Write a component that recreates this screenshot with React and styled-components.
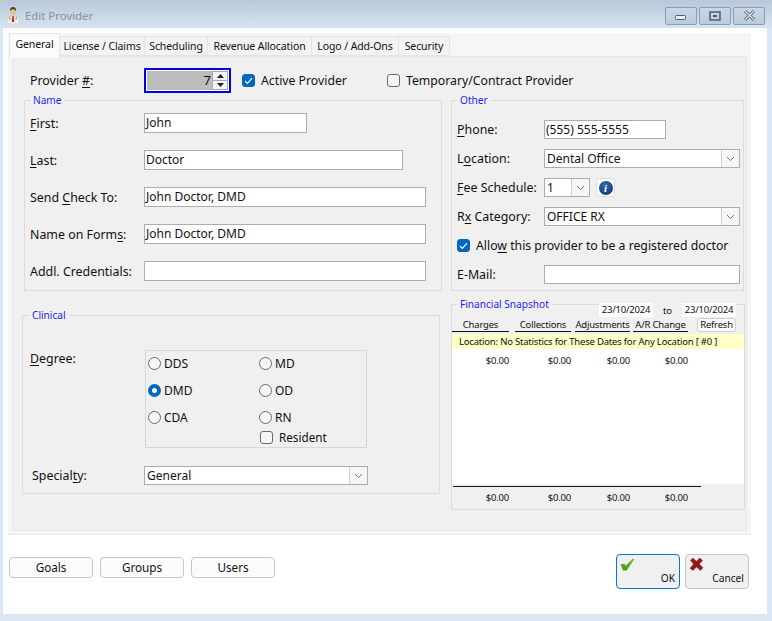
import React from "react"
import styled, { createGlobalStyle } from "styled-components"

const GlobalStyle = createGlobalStyle`
  html, body {
    margin: 0;
    padding: 0;
    background: #d9e6f3;
  }
  body {
    font-family: "Noto Sans", "Open Sans", sans-serif;
    font-size: 12.4px;
    color: #111;
  }
  u { text-underline-offset: 2px; text-decoration-thickness: 1px; }
`

const Window = styled.div`
  width: 772px;
  height: 621px;
  display: flex;
  flex-direction: column;
  overflow: hidden;
  background: #d9e6f3;
`

const TitleBar = styled.div`
  height: 28px;
  flex: none;
  display: flex;
  align-items: center;
  padding: 3px 7px 0 7px;
  box-sizing: border-box;
  background: linear-gradient(#b9c8d8, #d6e4f2);
`

const Title = styled.span`
  margin-left: 6px;
  color: #8b9096;
  font-size: 11.4px;
`

const WinControls = styled.div`
  margin-left: auto;
  display: flex;
  gap: 2px;
`

const WinButton = styled.div`
  width: 32px;
  height: 18px;
  box-sizing: border-box;
  border: 1px solid #8c9cb1;
  border-radius: 2px;
  background: linear-gradient(#c9d7e6, #bccbdc);
  display: flex;
  align-items: center;
  justify-content: center;
`

const Client = styled.div`
  flex: none;
  height: 586px;
  margin: 0 5px 0 3px;
  background: #fff;
  padding: 5px 0 0 5px;
  box-sizing: border-box;
`

const TabFrame = styled.div`
  width: 743px;
  height: 502px;
  background: #f6f6f6;
  padding: 0 4px 3px 4px;
  box-sizing: border-box;
  border-bottom: 1px solid #e6e6e6;
  display: flex;
  flex-direction: column;
`

const TabStrip = styled.div`
  display: flex;
  height: 23px;
  flex: none;
  margin-left: -3px;
`

const Tab = styled.div`
  box-sizing: border-box;
  height: ${p => (p.$active ? "25px" : "20px")};
  margin-top: ${p => (p.$active ? "0" : "3px")};
  width: ${p => p.$w}px;
  background: ${p => (p.$active ? "#fbfbfb" : "#f3f3f3")};
  border: 1px solid #e4e4e4;
  border-bottom: ${p => (p.$active ? "none" : "1px solid #e4e4e4")};
  border-left-width: ${p => (p.$active ? "1px" : "0")};
  padding-bottom: ${p => (p.$active ? "4px" : "0")};
  display: flex;
  align-items: center;
  justify-content: center;
  font-size: 10.5px;
  letter-spacing: -.1px;
  white-space: nowrap;
  position: relative;
  z-index: ${p => (p.$active ? 1 : 0)};
`

const TabPage = styled.div`
  flex: 1;
  border: 1px solid #e6e6e6;
  background: #f0f0f0;
  padding: 11px 0 0 9px;
  box-sizing: border-box;
`

const TopRow = styled.div`
  display: flex;
  align-items: center;
  height: 25px;
  margin-bottom: 7px;
  padding-left: 8px;
`

const Label = styled.label`
  flex: none;
  width: ${p => p.$w}px;
  margin-left: ${p => p.$ml || 0}px;
  white-space: nowrap;
  line-height: 19px;
`

const Spinner = styled.div`
  flex: none;
  width: 87px;
  height: 25px;
  box-sizing: border-box;
  border: 2px solid #0000e6;
  padding: 1px;
  background: #fff;
  margin-right: 11px;
  display: flex;
`

const SpinValue = styled.div`
  flex: 1;
  background: #bdbdbd;
  text-align: right;
  line-height: 19px;
  padding-right: 1px;
  font-size: 13px;
`

const SpinArrows = styled.div`
  width: 16px;
  display: flex;
  flex-direction: column;
  background: #f4f4f4;
  border: 1px solid #aaa;
  box-sizing: border-box;
`

const SpinArrow = styled.div`
  flex: 1;
  display: flex;
  align-items: center;
  justify-content: center;
  & + & { border-top: 1px solid #aaa; }
`

const Check = styled.span`
  flex: none;
  width: 13px;
  height: 13px;
  box-sizing: border-box;
  border-radius: 3px;
  border: 1px solid ${p => (p.$on ? "#0067c0" : "#6a6a6a")};
  background: ${p => (p.$on ? "#0067c0" : "#f6f6f6")};
  display: inline-flex;
  align-items: center;
  justify-content: center;
`

const CheckRow = styled.div`
  display: flex;
  align-items: center;
  gap: 6px;
  white-space: nowrap;
  font-size: ${p => p.$fs || 12.25}px;
  width: ${p => (p.$w ? `${p.$w}px` : "auto")};
  margin-left: ${p => p.$ml || 0}px;
`

const Columns = styled.div`
  display: flex;
  gap: 11px;
`

const LeftColumn = styled.div`
  width: 418px;
  flex: none;
  display: flex;
  flex-direction: column;
  gap: 24px;
`

const RightColumn = styled.div`
  width: 294px;
  flex: none;
  display: flex;
  flex-direction: column;
  gap: 13px;
`

const Group = styled.fieldset`
  position: relative;
  margin: 0 0 0 ${p => p.$ml || 0}px;
  min-width: 0;
  box-sizing: border-box;
  border: 1px solid #dcdcdc;
  width: ${p => p.$w}px;
  height: ${p => p.$h}px;
  padding: ${p => p.$pad};
`

const Legend = styled.span`
  position: absolute;
  top: -7px;
  left: ${p => p.$x}px;
  background: #f0f0f0;
  padding: 0 3px;
  color: #1f1fef;
  font-size: 10.1px;
  line-height: 13px;
`

const Rows = styled.div`
  display: flex;
  flex-direction: column;
  gap: ${p => p.$gap}px;
`

const Row = styled.div`
  display: flex;
  align-items: center;
  height: ${p => p.$h || 20}px;
  margin-top: ${p => p.$mt || 0}px;
`

const Input = styled.div`
  flex: none;
  width: ${p => p.$w}px;
  height: ${p => p.$h || 20}px;
  box-sizing: border-box;
  border: 1px solid #adadad;
  background: #fff;
  padding-left: 1px;
  line-height: 17px;
  font-size: 12px;
  white-space: nowrap;
`

const Select = styled.div`
  flex: none;
  width: ${p => p.$w}px;
  height: 19px;
  box-sizing: border-box;
  border: 1px solid #adadad;
  background: #fff;
  padding-left: 2px;
  display: flex;
  justify-content: space-between;
  line-height: 17px;
  font-size: 12px;
`

const SelectArrow = styled.div`
  width: 17px;
  background: #f6f6f6;
  border-left: 1px solid #d0d0d0;
  display: flex;
  align-items: center;
  justify-content: center;
`

const InfoButton = styled.div`
  width: 19px;
  height: 19px;
  margin-left: 6px;
  box-sizing: border-box;
  background: #fbfbfb;
  border: 1px solid #dcdcdc;
  border-radius: 3px;
  display: flex;
  align-items: center;
  justify-content: center;
`

const InfoDot = styled.span`
  width: 14px;
  height: 14px;
  border-radius: 50%;
  background: radial-gradient(circle at 40% 30%, #2a6fb0, #0a2f66);
  color: #fff;
  font: italic bold 11px/14px "Liberation Serif", serif;
  text-align: center;
`

const DegreeRow = styled.div`
  display: flex;
  align-items: flex-start;
  padding-left: 7px;
`

const DegreeLabel = styled(Label)`
  margin-top: -1px;
`

const RadioBox = styled.div`
  width: 222px;
  height: 98px;
  box-sizing: border-box;
  border: 1px solid #d8d8d8;
  padding: 6px 0 0 2px;
  display: grid;
  grid-template-columns: 111px 1fr;
  grid-auto-rows: 13px;
  row-gap: 14px;
`

const RadioItem = styled.div`
  display: flex;
  align-items: center;
  gap: 3px;
  font-size: 12px;
`

const Radio = styled.span`
  width: 13px;
  height: 13px;
  box-sizing: border-box;
  border-radius: 50%;
  flex: none;
  border: ${p => (p.$on ? "4px solid #0067c0" : "1px solid #6a6a6a")};
  background: ${p => (p.$on ? "#fff" : "#f6f6f6")};
`

const ResidentCell = styled.div`
  grid-column: 2;
  margin-top: -9px;
`

const DateBar = styled.div`
  position: absolute;
  top: -4px;
  right: 8px;
  display: flex;
  align-items: center;
  font-size: 9.5px;
  letter-spacing: -.2px;
`

const DateBox = styled.div`
  width: 54px;
  height: 14px;
  background: #fff;
  text-align: center;
  line-height: 14px;
`

const DateTo = styled.span`
  width: 29px;
  text-align: center;
  background: #f0f0f0;
  line-height: 14px;
  padding-top: 3px;
`

const FinHeader = styled.div`
  display: flex;
  align-items: flex-end;
  height: 14px;
  margin-top: 13px;
  font-size: 9.5px;
  letter-spacing: -.2px;
  flex: none;
`

const FinCell = styled.div`
  flex: none;
  width: ${p => p.$w}px;
  margin-left: ${p => p.$ml}px;
  white-space: nowrap;
  text-align: ${p => (p.$num ? "right" : "center")};
  line-height: 13px;
  border-bottom: ${p => (p.$num ? "none" : "1px solid #111")};
`

const RefreshButton = styled.div`
  width: 39px;
  height: 14px;
  margin-left: 9px;
  box-sizing: border-box;
  background: #fbfbfb;
  border: 1px solid #cfcfcf;
  border-radius: 3px;
  text-align: center;
  line-height: 12px;
`

const YellowBar = styled.div`
  height: 15px;
  margin-top: 2px;
  background: #ffffc8;
  font-size: 9.5px;
  letter-spacing: -.2px;
  line-height: 15px;
  padding-left: 7px;
  white-space: nowrap;
`

const WhiteArea = styled.div`
  height: 135px;
  background: #fff;
  box-sizing: border-box;
  padding-top: 5px;
`

const NumberRow = styled.div`
  display: flex;
  font-size: 9.5px;
  letter-spacing: -.2px;
`

const TotalRule = styled.div`
  width: 248px;
  height: 1px;
  margin: 2px 0 4px 1px;
  background: #111;
`

const Footer = styled.div`
  display: flex;
  justify-content: space-between;
  align-items: flex-start;
  margin-top: 19px;
  padding: 0 18px 0 1px;
`

const FooterLeft = styled.div`
  display: flex;
  gap: 7px;
  margin-top: 3px;
`

const FooterRight = styled.div`
  display: flex;
  gap: 5px;
`

const PlainButton = styled.div`
  width: 84px;
  height: 21px;
  box-sizing: border-box;
  background: #fbfbfb;
  border: 1px solid #c6c6c6;
  border-radius: 4px;
  text-align: center;
  line-height: 19px;
  font-size: 11.7px;
`

const ActionButton = styled.div`
  position: relative;
  width: 64px;
  height: 35px;
  box-sizing: border-box;
  background: #f0f0f0;
  border: 1px solid ${p => (p.$primary ? "#0078d7" : "#c6c6c6")};
  border-radius: 4px;
  display: flex;
  flex-direction: column;
  align-items: flex-start;
  padding: 3px 4px 3px 2px;
`

const ActionLabel = styled.span`
  margin-top: auto;
  align-self: flex-end;
  font-size: 10.2px;
  line-height: 14px;
`

const Chevron = () => (
  <svg width="9" height="6" viewBox="0 0 9 6">
    <path d="M1 1l3.5 3.5L8 1" fill="none" stroke="#777" strokeWidth="1" />
  </svg>
)

const Tick = () => (
  <svg width="9" height="8" viewBox="0 0 9 8">
    <path d="M1 4l2.4 2.4L8 1.2" fill="none" stroke="#fff" strokeWidth="1.2" />
  </svg>
)

const DoctorIcon = () => (
  <svg width="12" height="17" viewBox="0 0 12 17">
    <path d="M3 3c0-2 1.5-3 3-3s3 1 3 3v1H3z" fill="#4a3a1e" />
    <circle cx="6" cy="5" r="2.8" fill="#e8c08a" />
    <path d="M0 17v-4c0-3 2-4 6-4s6 1 6 4v4z" fill="#f4f2ea" stroke="#b9b5a6" strokeWidth=".5" />
    <path d="M5.300 9h1.400l.6 6H4.700z" fill="#c62828" />
    <path d="M3 9l-1 3 1.500 1zM9 9l1 3-1.500 1z" fill="#6d8f55" />
  </svg>
)

const GreenCheck = () => (
  <svg width="17" height="15" viewBox="0 0 17 15">
    <defs>
      <linearGradient id="okGreen" x1="0" y1="1" x2="1" y2="0">
        <stop offset="0" stopColor="#3f8f14" />
        <stop offset="1" stopColor="#8cc63f" />
      </linearGradient>
    </defs>
    <path d="M.5 7.500L4.800 6.500 6.300 9 14.500.5 16.500 1.500 7.500 14.500H3.500z" fill="url(#okGreen)" />
  </svg>
)

const RedCross = () => (
  <svg width="17" height="16" viewBox="0 0 17 16">
    <path d="M1 3l3-3 4.500 4L12.500 0l3.500 3-4 4.500L16.500 12l-3 3.500-5-4.500L4 15.500 .5 12.500 5 7.500z" fill="#8f1d16" stroke="#6e120d" strokeWidth=".5" />
  </svg>
)

const FIN_COLS = [
  { w: 57, ml: 0 },
  { w: 56, ml: 6 },
  { w: 55, ml: 4 },
  { w: 55, ml: 3 },
]
const FIN_HEADS = ["Charges", "Collections", "Adjustments", "A/R Change"]
const TABS = [
  ["General", 51],
  ["License / Claims", 85],
  ["Scheduling", 63],
  ["Revenue Allocation", 104],
  ["Logo / Add-Ons", 87],
  ["Security", 51],
]

const Numbers = () => (
  <NumberRow>
    {FIN_COLS.map((c, i) => (
      <FinCell key={i} $num $w={c.w} $ml={c.ml}>$0.00</FinCell>
    ))}
  </NumberRow>
)

const SelectBox = ({ w, value }) => (
  <Select $w={w}>
    {value}
    <SelectArrow><Chevron /></SelectArrow>
  </Select>
)

const App = () => {
  return (
    <Window>
      <GlobalStyle />
      <TitleBar>
        <DoctorIcon />
        <Title>Edit Provider</Title>
        <WinControls>
          <WinButton>
            <svg width="12" height="10" viewBox="0 0 12 10"><rect x=".5" y="4.500" width="10" height="4" rx="1" fill="#e8eef5" stroke="#4d5b6e" /></svg>
          </WinButton>
          <WinButton>
            <svg width="12" height="10" viewBox="0 0 12 10"><rect x="1" y="1" width="10" height="8" fill="none" stroke="#4d5b6e" strokeWidth="1.500" /><rect x="4" y="4" width="4" height="2" fill="#4d5b6e" /></svg>
          </WinButton>
          <WinButton>
            <svg width="13" height="11" viewBox="0 0 13 11">
              <path d="M2 1l9 9M11 1l-9 9" stroke="#4d5b6e" strokeWidth="3" />
              <path d="M2 1l9 9M11 1l-9 9" stroke="#e8eef5" strokeWidth="1.200" />
            </svg>
          </WinButton>
        </WinControls>
      </TitleBar>
      <Client>
        <TabFrame>
          <TabStrip>
            {TABS.map(([name, w], i) => (
              <Tab key={name} $active={i === 0} $w={w}>{name}</Tab>
            ))}
          </TabStrip>
          <TabPage>
            <TopRow>
              <Label $w={114}>Provider <u>#</u>:</Label>
              <Spinner>
                <SpinValue>7</SpinValue>
                <SpinArrows>
                  <SpinArrow><svg width="7" height="4" viewBox="0 0 7 4"><path d="M3.500 0L7 4H0z" fill="#222" /></svg></SpinArrow>
                  <SpinArrow><svg width="7" height="4" viewBox="0 0 7 4"><path d="M3.500 4L7 0H0z" fill="#222" /></svg></SpinArrow>
                </SpinArrows>
              </Spinner>
              <CheckRow $w={145}><Check $on><Tick /></Check><span>Active Provider</span></CheckRow>
              <CheckRow><Check /><span>Temporary/Contract Provider</span></CheckRow>
            </TopRow>
            <Columns>
              <LeftColumn>
                <Group $ml={2} $w={418} $h={191} $pad="12px 0 0 5px">
                  <Legend $x={5}>Name</Legend>
                  <Rows $gap={17}>
                    <Row><Label $w={114}><u>F</u>irst:</Label><Input $w={163}>John</Input></Row>
                    <Row><Label $w={114}><u>L</u>ast:</Label><Input $w={259}>Doctor</Input></Row>
                    <Row><Label $w={114}>Send <u>C</u>heck To:</Label><Input $w={282}>John Doctor, DMD</Input></Row>
                    <Row><Label $w={114}>Name on Form<u>s</u>:</Label><Input $w={282}>John Doctor, DMD</Input></Row>
                    <Row><Label $w={114}>Addl. Credentials:</Label><Input $w={282} /></Row>
                  </Rows>
                </Group>
                <Group $w={418} $h={179} $pad="34px 0 0 0">
                  <Legend $x={6}>Clinical</Legend>
                  <DegreeRow>
                    <DegreeLabel $w={115}><u>D</u>egree:</DegreeLabel>
                    <RadioBox>
                      <RadioItem><Radio />DDS</RadioItem>
                      <RadioItem><Radio />MD</RadioItem>
                      <RadioItem><Radio $on />DMD</RadioItem>
                      <RadioItem><Radio />OD</RadioItem>
                      <RadioItem><Radio />CDA</RadioItem>
                      <RadioItem><Radio />RN</RadioItem>
                      <ResidentCell>
                        <CheckRow $ml={1} $fs={11.7}><Check /><span>Resident</span></CheckRow>
                      </ResidentCell>
                    </RadioBox>
                  </DegreeRow>
                  <Row $h={19} $mt={18}>
                    <Label $w={112} $ml={9}>Special<u>t</u>y:</Label>
                    <SelectBox w={224} value="General" />
                  </Row>
                </Group>
              </LeftColumn>
              <RightColumn>
                <Group $w={293} $h={191} $pad="19px 0 0 5px">
                  <Legend $x={5}>Other</Legend>
                  <Rows $gap={10}>
                    <Row $h={19}><Label $w={87}><u>P</u>hone:</Label><Input $w={122} $h={19}>(555) 555-5555</Input></Row>
                    <Row $h={19}><Label $w={87}>L<u>o</u>cation:</Label><SelectBox w={196} value="Dental Office" /></Row>
                    <Row $h={19}>
                      <Label $w={87}><u>F</u>ee Schedule:</Label>
                      <SelectBox w={46} value="1" />
                      <InfoButton><InfoDot>i</InfoDot></InfoButton>
                    </Row>
                    <Row $h={19}><Label $w={87}>R<u>x</u> Category:</Label><SelectBox w={196} value="OFFICE RX" /></Row>
                    <Row $h={19}>
                      <CheckRow><Check $on><Tick /></Check><span>Allo<u>w</u> this provider to be a registered doctor</span></CheckRow>
                    </Row>
                    <Row $h={19}><Label $w={87}>E-Mail:</Label><Input $w={196} $h={19} /></Row>
                  </Rows>
                </Group>
                <Group $w={294} $h={206} $pad="0">
                  <Legend $x={5}>Financial Snapshot</Legend>
                  <DateBar>
                    <DateBox>23/10/2024</DateBox>
                    <DateTo>to</DateTo>
                    <DateBox>23/10/2024</DateBox>
                  </DateBar>
                  <FinHeader>
                    {FIN_COLS.map((c, i) => (
                      <FinCell key={c.ml} $w={c.w} $ml={c.ml}>{FIN_HEADS[i]}</FinCell>
                    ))}
                    <RefreshButton>Refresh</RefreshButton>
                  </FinHeader>
                  <YellowBar>Location: No Statistics for These Dates for Any Location [ #0 ]</YellowBar>
                  <WhiteArea><Numbers /></WhiteArea>
                  <TotalRule />
                  <Numbers />
                </Group>
              </RightColumn>
            </Columns>
          </TabPage>
        </TabFrame>
        <Footer>
          <FooterLeft>
            <PlainButton>Goals</PlainButton>
            <PlainButton>Groups</PlainButton>
            <PlainButton>Users</PlainButton>
          </FooterLeft>
          <FooterRight>
            <ActionButton $primary>
              <GreenCheck />
              <ActionLabel>OK</ActionLabel>
            </ActionButton>
            <ActionButton>
              <RedCross />
              <ActionLabel>Cancel</ActionLabel>
            </ActionButton>
          </FooterRight>
        </Footer>
      </Client>
    </Window>
  )
}

export default App
